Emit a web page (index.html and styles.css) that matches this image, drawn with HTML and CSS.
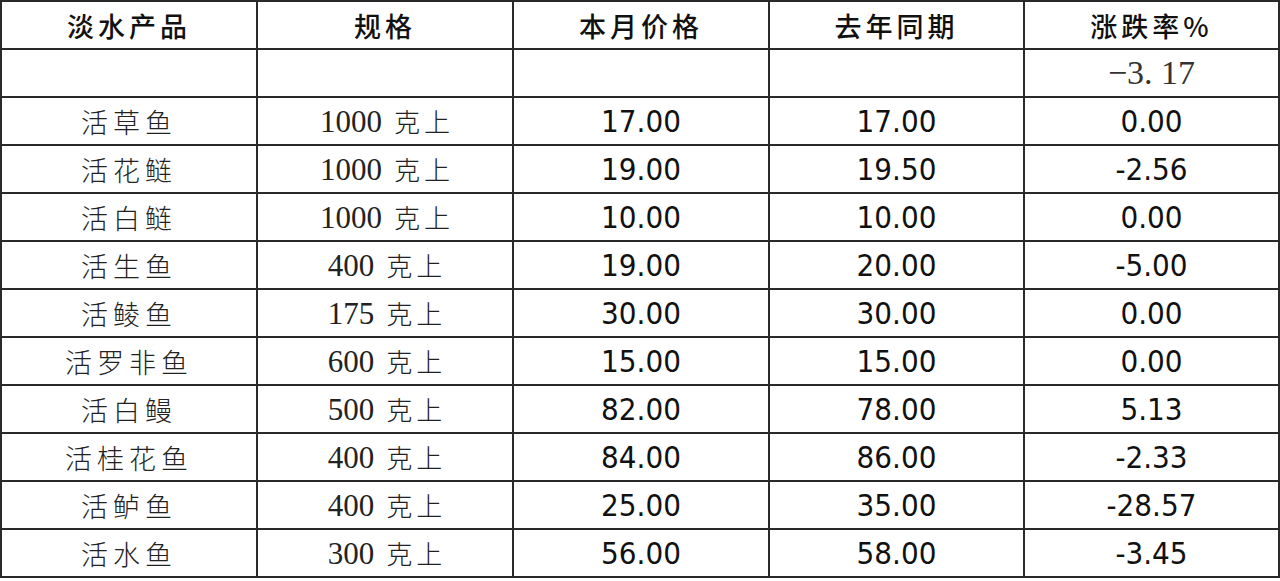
FILE: index.html
```html
<!DOCTYPE html>
<html lang="zh-CN">
<head>
<meta charset="utf-8">
<title>淡水产品价格</title>
<link rel="stylesheet" href="styles.css">
</head>
<body>
<table class="price-table">
  <colgroup>
    <col class="c1"><col class="c2"><col class="c3"><col class="c4"><col class="c5">
  </colgroup>
  <thead>
    <tr class="head">
      <th>淡水产品</th><th>规格</th><th>本月价格</th><th>去年同期</th><th>涨跌率%</th>
    </tr>
  </thead>
  <tbody>
    <tr>
      <td></td><td></td><td></td><td></td><td class="avg">−3. 17</td>
    </tr>
    <tr><td class="name">活草鱼</td><td class="spec">1000<span class="cn">克上</span></td><td class="num">17.00</td><td class="num">17.00</td><td class="num">0.00</td></tr>
    <tr><td class="name">活花鲢</td><td class="spec">1000<span class="cn">克上</span></td><td class="num">19.00</td><td class="num">19.50</td><td class="num">-2.56</td></tr>
    <tr><td class="name">活白鲢</td><td class="spec">1000<span class="cn">克上</span></td><td class="num">10.00</td><td class="num">10.00</td><td class="num">0.00</td></tr>
    <tr><td class="name">活生鱼</td><td class="spec">400<span class="cn">克上</span></td><td class="num">19.00</td><td class="num">20.00</td><td class="num">-5.00</td></tr>
    <tr><td class="name">活鲮鱼</td><td class="spec">175<span class="cn">克上</span></td><td class="num">30.00</td><td class="num">30.00</td><td class="num">0.00</td></tr>
    <tr><td class="name">活罗非鱼</td><td class="spec">600<span class="cn">克上</span></td><td class="num">15.00</td><td class="num">15.00</td><td class="num">0.00</td></tr>
    <tr><td class="name">活白鳗</td><td class="spec">500<span class="cn">克上</span></td><td class="num">82.00</td><td class="num">78.00</td><td class="num">5.13</td></tr>
    <tr><td class="name">活桂花鱼</td><td class="spec">400<span class="cn">克上</span></td><td class="num">84.00</td><td class="num">86.00</td><td class="num">-2.33</td></tr>
    <tr><td class="name">活鲈鱼</td><td class="spec">400<span class="cn">克上</span></td><td class="num">25.00</td><td class="num">35.00</td><td class="num">-28.57</td></tr>
    <tr><td class="name">活水鱼</td><td class="spec">300<span class="cn">克上</span></td><td class="num">56.00</td><td class="num">58.00</td><td class="num">-3.45</td></tr>
  </tbody>
</table>
</body>
</html>
```
FILE: styles.css
```css
html, body {
  margin: 0;
  padding: 0;
  background: #ffffff;
}
body {
  padding: 0 2px 0 0;
}
.price-table {
  border-collapse: collapse;
  table-layout: fixed;
  width: 1278px;
  color: #111;
}
.c1, .c2, .c3 { width: 256px; }
.c4, .c5 { width: 255px; }
.price-table th,
.price-table td {
  border: 2px solid #2a2a2a;
  height: 46px;
  padding: 0;
  text-align: center;
  vertical-align: middle;
  white-space: nowrap;
  line-height: 1;
}
.head th {
  font-family: "Noto Sans CJK SC", sans-serif;
  font-weight: 500;
  font-size: 27px;
  letter-spacing: 4px;
  color: #111;
}
.name {
  font-family: "Noto Sans CJK SC", sans-serif;
  font-weight: 300;
  font-size: 27px;
  letter-spacing: 5px;
  color: #222;
}
.spec {
  font-family: "Liberation Serif", serif;
  font-size: 31px;
  color: #222;
}
.spec .cn {
  font-family: "Noto Sans CJK SC", sans-serif;
  font-weight: 300;
  font-size: 26px;
  letter-spacing: 4px;
  margin-left: 12px;
  margin-right: -4px;
}
.num {
  font-family: "DejaVu Sans Condensed", "DejaVu Sans", sans-serif;
  font-stretch: condensed;
  font-size: 31px;
  color: #111;
  padding-top: 4px;
}
.avg {
  font-family: "Liberation Serif", serif;
  font-size: 34px;
  color: #333;
}
```
